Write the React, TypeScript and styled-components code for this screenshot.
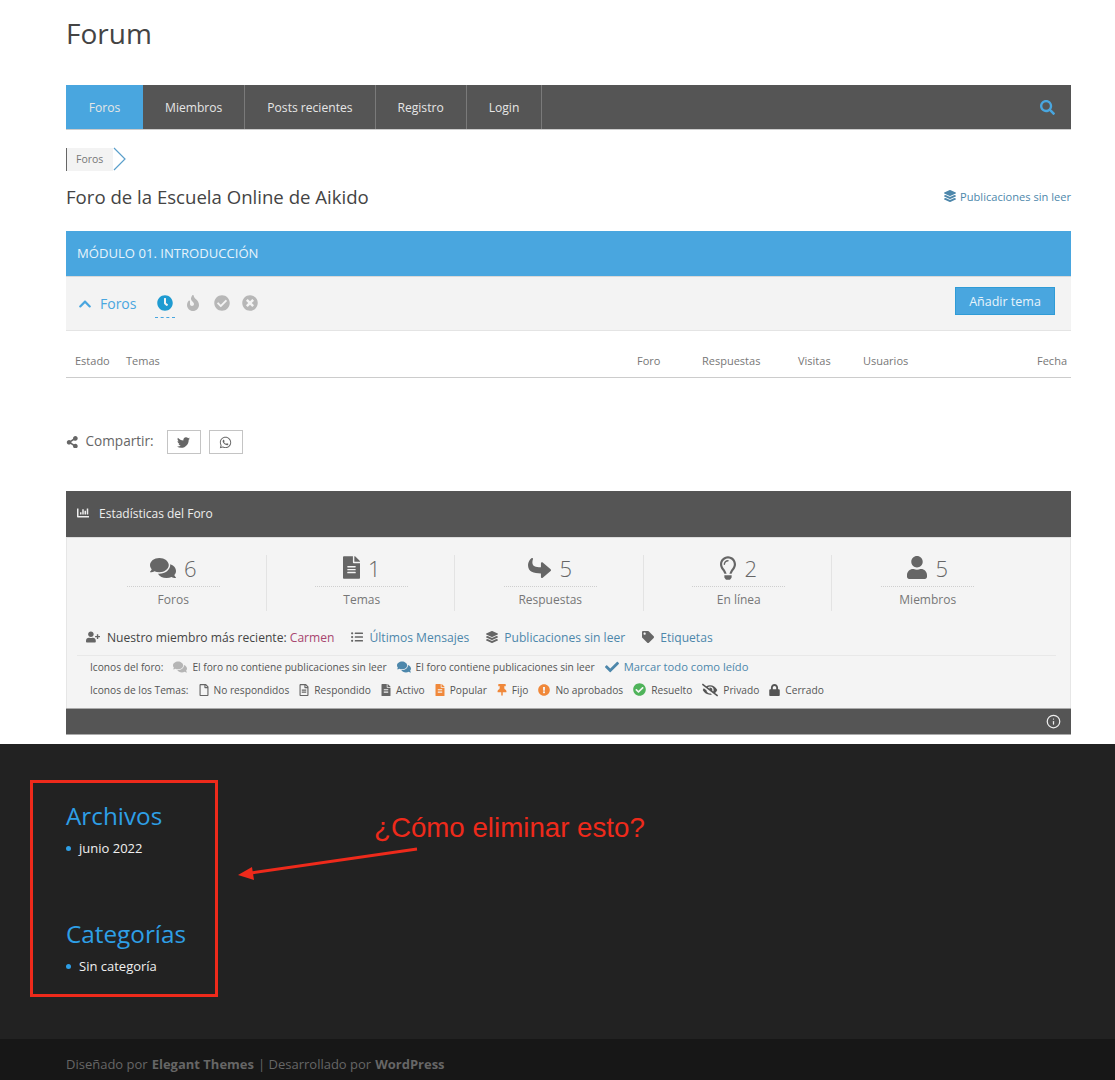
import styled, { createGlobalStyle } from "styled-components";
import { Info } from "lucide-react";
import {
  FaChartBar,
  FaCheck,
  FaCheckCircle,
  FaChevronUp,
  FaClock,
  FaComments,
  FaExclamationCircle,
  FaEyeSlash,
  FaFileAlt,
  FaFire,
  FaLayerGroup,
  FaListUl,
  FaLock,
  FaRegFile,
  FaRegFileAlt,
  FaRegLightbulb,
  FaReply,
  FaSearch,
  FaShareAlt,
  FaTag,
  FaThumbtack,
  FaTimesCircle,
  FaTwitter,
  FaUser,
  FaUserPlus,
  FaWhatsapp,
} from "react-icons/fa";

const BLUE = "#49a6df";
const DARK = "#555555";
const LINK = "#4d87ab";

const navLinks = ["Foros", "Miembros", "Posts recientes", "Registro", "Login"];

const columns = [
  { txt: "Foro", width: 65 },
  { txt: "Respuestas", width: 96 },
  { txt: "Visitas", width: 65 },
  { txt: "Usuarios", width: 46 },
];

const ReplyIcon = styled(FaReply)`
  transform: rotate(180deg);
`;

const stats = [
  { Icon: FaComments, count: 6, label: "Foros", width: 26, height: 26 },
  { Icon: FaFileAlt, count: 1, label: "Temas", width: 17, height: 23 },
  { Icon: ReplyIcon, count: 5, label: "Respuestas", width: 23, height: 24 },
  { Icon: FaRegLightbulb, count: 2, label: "En línea", width: 16, height: 24 },
  { Icon: FaUser, count: 5, label: "Miembros", width: 20, height: 23 },
];

const forumLegend = [
  { Icon: FaComments, txt: "El foro no contiene publicaciones sin leer", color: "#b5b5b5", width: 14 },
  { Icon: FaComments, txt: "El foro contiene publicaciones sin leer", color: LINK, width: 14 },
];

const topicLegend = [
  { Icon: FaRegFile, txt: "No respondidos", color: "#666666", width: 10 },
  { Icon: FaRegFileAlt, txt: "Respondido", color: "#666666", width: 10 },
  { Icon: FaFileAlt, txt: "Activo", color: "#666666", width: 10 },
  { Icon: FaFileAlt, txt: "Popular", color: "#f0883a", width: 10 },
  { Icon: FaThumbtack, txt: "Fijo", color: "#f0883a", width: 10 },
  { Icon: FaExclamationCircle, txt: "No aprobados", color: "#f0883a", width: 12 },
  { Icon: FaCheckCircle, txt: "Resuelto", color: "#4fb35a", width: 13 },
  { Icon: FaEyeSlash, txt: "Privado", color: "#555555", width: 16 },
  { Icon: FaLock, txt: "Cerrado", color: "#555555", width: 11 },
];

const GlobalStyle = createGlobalStyle`
  html, body {
    margin: 0;
    padding: 0;
    background: #ffffff;
    font-family: "Open Sans", "Noto Sans", sans-serif;
  }
`;

export default function App() {
  return (
    <StyledPage>
      <GlobalStyle />
      <StyledMain>
        <StyledLogo>Forum</StyledLogo>
        <StyledNav>
          {navLinks.map((txt, i) => (
            <StyledNavItem key={txt} $active={i === 0}>
              {txt}
            </StyledNavItem>
          ))}
          <StyledSearch>
            <FaSearch />
          </StyledSearch>
        </StyledNav>
        <StyledCrumb>
          <StyledCrumbTxt>Foros</StyledCrumbTxt>
          <svg width="14" height="24" viewBox="0 0 14 24">
            <path d="M1 1l11 11L1 23" fill="none" stroke="#5a9fcb" strokeWidth="1.2" />
          </svg>
        </StyledCrumb>
        <StyledHeading>
          <StyledTitle>Foro de la Escuela Online de Aikido</StyledTitle>
          <StyledUnread>
            <FaLayerGroup />
            Publicaciones sin leer
          </StyledUnread>
        </StyledHeading>
        <StyledModule>MÓDULO 01. INTRODUCCIÓN</StyledModule>
        <StyledTools>
          <StyledForosLink>
            <FaChevronUp />
            Foros
          </StyledForosLink>
          <StyledFilters>
            <StyledFilter $active>
              <FaClock />
            </StyledFilter>
            <StyledFilter>
              <FaFire />
            </StyledFilter>
            <StyledFilter>
              <FaCheckCircle />
            </StyledFilter>
            <StyledFilter>
              <FaTimesCircle />
            </StyledFilter>
          </StyledFilters>
          <StyledAddBtn>Añadir tema</StyledAddBtn>
        </StyledTools>
        <StyledTableHead>
          <StyledStateCol>Estado</StyledStateCol>
          <StyledTopicCol>Temas</StyledTopicCol>
          {columns.map(({ txt, width }) => (
            <StyledCol key={txt} $width={width}>
              {txt}
            </StyledCol>
          ))}
          <StyledDateCol>Fecha</StyledDateCol>
        </StyledTableHead>
        <StyledShare>
          <FaShareAlt />
          <StyledShareTxt>Compartir:</StyledShareTxt>
          <StyledShareBtn>
            <FaTwitter />
          </StyledShareBtn>
          <StyledShareBtn>
            <FaWhatsapp />
          </StyledShareBtn>
        </StyledShare>
        <StyledStatsHead>
          <FaChartBar />
          Estadísticas del Foro
        </StyledStatsHead>
        <StyledStatsBody>
          <StyledStatsGrid>
            {stats.map(({ Icon, count, label, width, height }) => (
              <StyledStat key={label}>
                <StyledStatTop $width={width} $height={height}>
                  <Icon />
                  <span>{count}</span>
                </StyledStatTop>
                <StyledStatLabel>{label}</StyledStatLabel>
              </StyledStat>
            ))}
          </StyledStatsGrid>
          <StyledLinksRow>
            <StyledLinkItem $iconSize={14}>
              <FaUserPlus />
              <span>
                Nuestro miembro más reciente: <StyledMember>Carmen</StyledMember>
              </span>
            </StyledLinkItem>
            <StyledLinkItem $link>
              <FaListUl />
              Últimos Mensajes
            </StyledLinkItem>
            <StyledLinkItem $link>
              <FaLayerGroup />
              Publicaciones sin leer
            </StyledLinkItem>
            <StyledLinkItem $link>
              <FaTag />
              Etiquetas
            </StyledLinkItem>
          </StyledLinksRow>
          <StyledLegend>
            <StyledLegendRow $gap={10}>
              <span>Iconos del foro:</span>
              {forumLegend.map(({ Icon, txt, color, width }) => (
                <StyledLegendItem key={txt} $color={color} $width={width}>
                  <Icon />
                  {txt}
                </StyledLegendItem>
              ))}
              <StyledLegendItem $color={LINK} $width={14} $link>
                <FaCheck />
                Marcar todo como leído
              </StyledLegendItem>
            </StyledLegendRow>
            <StyledLegendRow $gap={10}>
              <span>Iconos de los Temas:</span>
              {topicLegend.map(({ Icon, txt, color, width }) => (
                <StyledLegendItem key={txt} $color={color} $width={width}>
                  <Icon />
                  {txt}
                </StyledLegendItem>
              ))}
            </StyledLegendRow>
          </StyledLegend>
        </StyledStatsBody>
        <StyledStatsFoot>
          <Info size={15} strokeWidth={2} />
        </StyledStatsFoot>
      </StyledMain>
      <StyledFooter>
        <StyledWidgetTitle>Archivos</StyledWidgetTitle>
        <StyledWidgetItem>junio 2022</StyledWidgetItem>
        <StyledWidgetTitle $second>Categorías</StyledWidgetTitle>
        <StyledWidgetItem>Sin categoría</StyledWidgetItem>
        <StyledRedBox />
        <StyledQuestion>¿Cómo eliminar esto?</StyledQuestion>
        <StyledArrow width="190" height="34" viewBox="0 0 190 34">
          <path d="M180 3L14 27" stroke="#ee2a1b" strokeWidth="3" fill="none" />
          <path d="M1 29l14-8 2 13z" fill="#ee2a1b" />
        </StyledArrow>
      </StyledFooter>
      <StyledBottom>
        Diseñado por <b>Elegant Themes</b> | Desarrollado por <b>WordPress</b>
      </StyledBottom>
    </StyledPage>
  );
}

const StyledPage = styled.div`
  width: 1115px;
  height: 1080px;
  overflow: hidden;
`;

const StyledMain = styled.main`
  height: 744px;
  box-sizing: border-box;
  padding: 0 44px 0 66px;
`;

const StyledLogo = styled.div`
  height: 85px;
  padding-top: 14px;
  box-sizing: border-box;
  font-size: 28px;
  line-height: 38px;
  color: #444444;
`;

const StyledNav = styled.nav`
  display: flex;
  height: 45px;
  background: ${DARK};
  border-bottom: 1px solid #cccccc;
  box-sizing: border-box;
`;

const StyledNavItem = styled.div<{ $active?: boolean }>`
  display: flex;
  align-items: center;
  padding: 0 22px;
  font-size: 12.1px;
  color: #e6e6e6;
  background: ${({ $active }) => ($active ? BLUE : "transparent")};
  border-right: 1px solid #7a7a7a;
  &:first-child {
    width: 77px;
    padding: 0;
    justify-content: center;
    box-sizing: border-box;
    border-right: 0;
  }
`;

const StyledSearch = styled.div`
  display: flex;
  align-items: center;
  margin-left: auto;
  padding-right: 16px;
  color: ${BLUE};
  font-size: 15px;
`;

const StyledCrumb = styled.div`
  display: flex;
  align-items: center;
  height: 24px;
  margin-top: 17px;
`;

const StyledCrumbTxt = styled.div`
  display: flex;
  align-items: center;
  height: 23px;
  width: 47px;
  padding-left: 9px;
  box-sizing: border-box;
  background: #f3f3f3;
  border-left: 1px solid #666666;
  font-size: 10.5px;
  color: #777777;
`;

const StyledHeading = styled.div`
  display: flex;
  align-items: center;
  justify-content: space-between;
  height: 24px;
  margin-top: 13px;
`;

const StyledTitle = styled.h1`
  margin: 0;
  font-size: 18.6px;
  font-weight: 400;
  color: #444444;
`;

const StyledUnread = styled.div`
  display: flex;
  align-items: center;
  gap: 4px;
  font-size: 11.1px;
  color: ${LINK};
  svg {
    font-size: 12px;
  }
`;

const StyledModule = styled.div`
  display: flex;
  align-items: center;
  height: 45px;
  margin-top: 23px;
  padding: 0 0 1px 11px;
  box-sizing: border-box;
  background: ${BLUE};
  font-size: 13.1px;
  color: #e8f4fb;
`;

const StyledTools = styled.div`
  display: flex;
  align-items: center;
  height: 55px;
  padding: 0 16px 0 12px;
  background: #f3f3f3;
  border-top: 1px solid #d8d8d8;
  border-bottom: 1px solid #e4e4e4;
  box-sizing: border-box;
`;

const StyledForosLink = styled.div`
  display: flex;
  align-items: center;
  gap: 8px;
  font-size: 14px;
  color: ${BLUE};
  svg {
    font-size: 14px;
  }
`;

const StyledFilters = styled.div`
  display: flex;
  gap: 12.5px;
  margin-left: 19px;
`;

const StyledFilter = styled.div<{ $active?: boolean }>`
  display: flex;
  justify-content: center;
  width: 16px;
  height: 19px;
  padding: 0 ${({ $active }) => ($active ? "2px" : "0")} 3px;
  margin-top: 5px;
  margin-right: ${({ $active }) => ($active ? "-2.5px" : "0")};
  font-size: 16px;
  color: ${({ $active }) => ($active ? "#1f9bd1" : "#b7b7b7")};
  border-bottom: ${({ $active }) => ($active ? `1px dashed ${BLUE}` : "1px solid transparent")};
`;

const StyledAddBtn = styled.button`
  width: 100px;
  height: 28px;
  margin: 0 0 5px auto;
  padding: 0;
  background: ${BLUE};
  border: 1px solid #2f9bd6;
  font-family: inherit;
  font-size: 12.5px;
  color: #e8f4fb;
`;

const StyledTableHead = styled.div`
  display: flex;
  align-items: center;
  height: 47px;
  padding-top: 13px;
  box-sizing: border-box;
  border-bottom: 1px solid #cccccc;
  font-size: 11px;
  color: #777777;
`;

const StyledStateCol = styled.div`
  width: 60px;
  padding-left: 9px;
  box-sizing: border-box;
`;

const StyledTopicCol = styled.div`
  flex: 1;
`;

const StyledCol = styled.div<{ $width: number }>`
  width: ${({ $width }) => $width}px;
`;

const StyledDateCol = styled.div`
  width: 162px;
  padding-right: 4px;
  box-sizing: border-box;
  text-align: right;
`;

const StyledShare = styled.div`
  display: flex;
  align-items: center;
  height: 24px;
  margin-top: 52px;
  color: #666666;
  svg {
    font-size: 12.5px;
  }
`;

const StyledShareTxt = styled.span`
  margin: 0 13px 4px 7px;
  font-size: 13.6px;
`;

const StyledShareBtn = styled.div`
  display: flex;
  align-items: center;
  justify-content: center;
  width: 34px;
  height: 24px;
  margin-right: 8px;
  box-sizing: border-box;
  border: 1px solid #c4c4c4;
  svg {
    font-size: 13px;
  }
`;

const StyledStatsHead = styled.div`
  display: flex;
  align-items: center;
  gap: 10px;
  height: 46px;
  margin-top: 37px;
  padding: 0 0 2px 11px;
  box-sizing: border-box;
  background: ${DARK};
  font-size: 12px;
  color: #eeeeee;
`;

const StyledStatsBody = styled.div`
  height: 171px;
  padding: 17px 0 0 11px;
  box-sizing: border-box;
  background: #f4f4f4;
  border-top: 1px solid #dddddd;
  border-right: 1px solid #e6e6e6;
  border-left: 1px solid #e6e6e6;
`;

const StyledStatsGrid = styled.div`
  display: grid;
  grid-template-columns: repeat(5, 188.5px);
`;

const StyledStat = styled.div`
  display: flex;
  flex-direction: column;
  align-items: center;
  height: 56px;
  padding-left: 3px;
  box-sizing: border-box;
  border-right: 1px solid #e3e3e3;
  &:last-child {
    border-right: 0;
  }
`;

const StyledStatTop = styled.div<{ $width: number; $height: number }>`
  display: flex;
  align-items: center;
  justify-content: center;
  gap: 8px;
  width: 93px;
  height: 32px;
  padding-bottom: 6px;
  box-sizing: border-box;
  border-bottom: 1px dotted #cfcfcf;
  font-size: 22px;
  font-weight: 300;
  color: #666666;
  svg {
    width: ${({ $width }) => $width}px;
    height: ${({ $height }) => $height}px;
  }
`;

const StyledStatLabel = styled.div`
  margin-top: 4px;
  font-size: 12px;
  color: #777777;
`;

const StyledLinksRow = styled.div`
  display: flex;
  align-items: center;
  gap: 17px;
  height: 26px;
  margin-top: 13px;
  padding: 0 0 5px 9px;
  margin-right: 14px;
  margin-left: -1px;
  border-bottom: 1px solid #e8e8e8;
`;

const StyledLinkItem = styled.div<{ $link?: boolean; $iconSize?: number }>`
  display: flex;
  align-items: center;
  gap: ${({ $iconSize }) => ($iconSize ? "7px" : "6px")};
  font-size: 12.1px;
  color: ${({ $link }) => ($link ? LINK : "#444444")};
  svg {
    color: #666666;
    font-size: ${({ $iconSize }) => $iconSize ?? 12}px;
  }
`;

const StyledMember = styled.span`
  color: #a8466f;
`;

const StyledLegend = styled.div`
  margin-top: -1px;
  padding-left: 12px;
  font-size: 10.2px;
  line-height: 22px;
  color: #555555;
`;

const StyledLegendRow = styled.div<{ $gap: number }>`
  display: flex;
  align-items: center;
  gap: ${({ $gap }) => $gap}px;
  height: 23px;
`;

const StyledLegendItem = styled.div<{ $color: string; $width: number; $link?: boolean }>`
  display: flex;
  align-items: center;
  gap: 5px;
  color: ${({ $link }) => ($link ? LINK : "inherit")};
  font-size: ${({ $link }) => ($link ? "11.2px" : "inherit")};
  svg {
    color: ${({ $color }) => $color};
    width: ${({ $width }) => $width}px;
    height: ${({ $width }) => Math.max($width, 12)}px;
  }
`;

const StyledStatsFoot = styled.div`
  display: flex;
  align-items: center;
  justify-content: flex-end;
  height: 27px;
  padding-right: 10px;
  background: ${DARK};
  border-top: 1px solid #aaaaaa;
  border-bottom: 1px solid #aaaaaa;
  box-sizing: border-box;
  color: #eeeeee;
`;

const StyledFooter = styled.footer`
  position: relative;
  height: 295px;
  padding: 56px 0 0 66px;
  box-sizing: border-box;
  background: #222222;
`;

const StyledWidgetTitle = styled.h4<{ $second?: boolean }>`
  margin: ${({ $second }) => ($second ? "61px" : "0")} 0 0;
  font-size: 24.3px;
  line-height: 31px;
  font-weight: 400;
  color: #2e9fe6;
`;

const StyledWidgetItem = styled.div`
  position: relative;
  margin-top: 8px;
  padding-left: 13px;
  font-size: 13px;
  line-height: 18px;
  color: #f0f0f0;
  &::before {
    content: "";
    position: absolute;
    left: 0;
    top: 7px;
    width: 5px;
    height: 5px;
    border-radius: 50%;
    background: #2e9fe6;
  }
`;

const StyledRedBox = styled.div`
  position: absolute;
  left: 30px;
  top: 36px;
  width: 188px;
  height: 217px;
  box-sizing: border-box;
  border: 3px solid #ee2a1b;
`;

const StyledQuestion = styled.div`
  position: absolute;
  left: 374px;
  top: 66px;
  font-family: "Liberation Sans", Arial, sans-serif;
  font-size: 27.7px;
  line-height: 36px;
  color: #ee2a1b;
`;

const StyledArrow = styled.svg`
  position: absolute;
  left: 237px;
  top: 102px;
`;

const StyledBottom = styled.div`
  display: flex;
  align-items: center;
  gap: 4px;
  height: 41px;
  padding: 9px 0 0 66px;
  box-sizing: border-box;
  background: #171717;
  font-size: 13px;
  color: #666666;
  b {
    font-weight: 700;
    color: #666666;
  }
`;
